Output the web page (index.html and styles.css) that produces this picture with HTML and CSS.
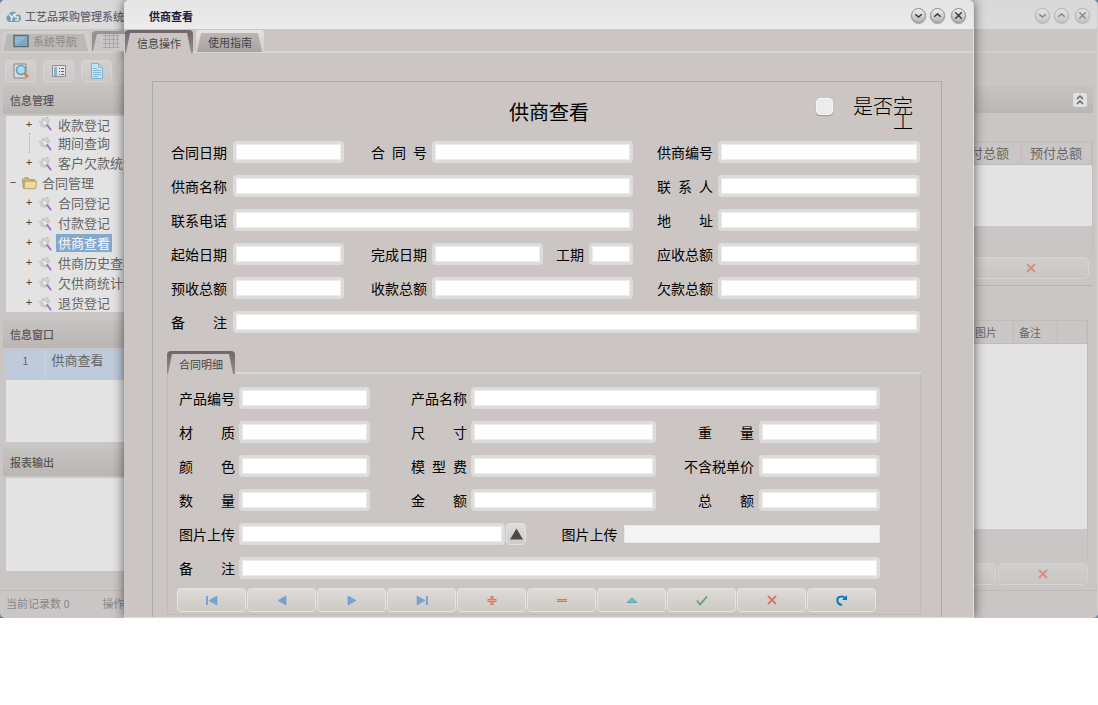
FILE: index.html
```
<!DOCTYPE html>
<html lang="zh-CN">

<head>
    <meta charset="UTF-8">
    <meta name="viewport" content="width=device-width, initial-scale=1.0">
    <title>工艺品采购管理系统</title>
    <link rel="stylesheet" href="styles.css">
</head>

<body>
    <!-- shared icons -->
    <svg class="sprite" aria-hidden="true">
        <symbol id="i-down" viewBox="0 0 16 16"><path d="M4 6.5L8 10l4-3.500" fill="none" stroke="#333" stroke-width="1.7"/></symbol>
        <symbol id="i-up" viewBox="0 0 16 16"><path d="M4 9.500L8 6l4 3.500" fill="none" stroke="#333" stroke-width="1.7"/></symbol>
        <symbol id="i-close" viewBox="0 0 16 16"><path d="M4 4l8 8M12 4l-8 8" fill="none" stroke="#333" stroke-width="1.6"/></symbol>
        <symbol id="i-wand" viewBox="0 0 16 16">
            <path d="M5 2l2 1 3-2 1 3 2 1-2 2 0 3-2 0-1 3-3-2-2 0 0-3-2-2 3-1z" fill="#cfcfcf" stroke="#b4b4b4" stroke-dasharray="1 1"/>
            <path d="M9 9l5 6" stroke="#a66fd0" stroke-width="2"/>
            <path d="M6 6l3 3" stroke="#f4f4f4" stroke-width="2"/>
        </symbol>
        <symbol id="i-cross" viewBox="0 0 12 12"><path d="M2 2l8 8M10 2l-8 8" fill="none" stroke="#d8756b" stroke-width="1.8"/></symbol>
    </svg>

    <div class="desktop">
        <div class="app">
            <header class="titlebar">
                <svg class="logo" viewBox="0 0 16 14"><path d="M4 13a4 4 0 0 1-1-7 5 5 0 0 1 9-1 4 4 0 0 1 0 8z" fill="#6f9fb8"/><path d="M4 5l3 4 2-4M7 9l-1 3M13 5h-3v3h3v3h-3" fill="none" stroke="#e4e8ea" stroke-width="1.5"/></svg>
                <h1>工艺品采购管理系统</h1>
                <div class="win-buttons">
                    <button type="button" aria-label="最小化"><svg><use href="#i-down"/></svg></button>
                    <button type="button" aria-label="最大化"><svg><use href="#i-up"/></svg></button>
                    <button type="button" aria-label="关闭"><svg><use href="#i-close"/></svg></button>
                </div>
            </header>
            <nav class="tabs">
                <button type="button" class="tab">
                    <svg class="tab-icon" viewBox="0 0 16 13"><path d="M1 1h14v11H1z" fill="#8dbad2" stroke="#656b70" stroke-width="1.5"/><path d="M2 11L14 2v9z" fill="#79a8c4"/></svg>
                    <span>系统导航</span>
                </button>
                <button type="button" class="tab active" aria-label="工作表">
                    <svg class="tab-icon" viewBox="0 0 16 14"><path d="M2.500 0v14M6.500 0v14M10.500 0v14M14.500 0v14M0 1.500h16M0 5.500h16M0 9.500h16M0 13.500h16" stroke="#aaa7a6" fill="none"/></svg>
                </button>
            </nav>

            <div class="app-body">
                <aside class="sidebar">
                    <div class="toolbar">
                        <button type="button" aria-label="查找"><svg viewBox="0 0 16 16"><path d="M1 1h12v14H1z" fill="#dcdcdc" stroke="#858585"/><circle cx="8" cy="7" r="4.500" fill="#a9dcef" stroke="#5f9dbd" stroke-width="1.500"/><path d="M11 10l4 4" stroke="#d08560" stroke-width="3"/></svg></button>
                        <button type="button" aria-label="列表"><svg viewBox="0 0 16 16"><path d="M1.500 2.500h13v11h-13z" fill="#e2e2e2" stroke="#8f8f8f"/><path d="M3 4h3v9H3z" fill="#86b5cc"/><path d="M8 5.500h1m1 0h3M8 8.500h1m1 0h3M8 11.500h1m1 0h3" stroke="#666"/></svg></button>
                        <button type="button" aria-label="文档"><svg viewBox="0 0 16 16"><path d="M2.500.5h7l4 4v11h-11z" fill="#c4e3f5" stroke="#7fb0cf"/><path d="M9.500.5v4h4M4 5.500h4M4 7.500h8M4 9.500h8M4 11.500h8M4 13.500h5" fill="none" stroke="#86b9d6"/></svg></button>
                        <button type="button" aria-label="更多"></button>
                    </div>
                    <h2 class="pane-title">信息管理</h2>
                    <ul class="tree">
                        <li><i>+</i><svg><use href="#i-wand"/></svg><span>收款登记</span></li>
                        <li><i class="leaf"></i><svg><use href="#i-wand"/></svg><span>期间查询</span></li>
                        <li><i>+</i><svg><use href="#i-wand"/></svg><span>客户欠款统计</span></li>
                        <li class="folder"><i>−</i><svg viewBox="0 0 17 16"><path d="M1 4l2-2h4l2 2h5v9H2z" fill="#cbb97d" stroke="#a39461"/><path d="M3 5.500h13l-1 8H3z" fill="#ecdc9c" stroke="#b3a26a"/></svg><span>合同管理</span></li>
                        <li><i>+</i><svg><use href="#i-wand"/></svg><span>合同登记</span></li>
                        <li><i>+</i><svg><use href="#i-wand"/></svg><span>付款登记</span></li>
                        <li class="selected"><i>+</i><svg><use href="#i-wand"/></svg><span>供商查看</span></li>
                        <li><i>+</i><svg><use href="#i-wand"/></svg><span>供商历史查看</span></li>
                        <li><i>+</i><svg><use href="#i-wand"/></svg><span>欠供商统计表</span></li>
                        <li><i>+</i><svg><use href="#i-wand"/></svg><span>退货登记</span></li>
                    </ul>
                    <h2 class="pane-title">信息窗口</h2>
                    <div class="pane windows">
                        <table>
                            <tr><td class="num">1</td><td>供商查看</td></tr>
                        </table>
                    </div>
                    <h2 class="pane-title">报表输出</h2>
                    <div class="pane reports"></div>
                </aside>

                <main class="work">
                    <div class="band">
                        <button type="button" aria-label="收起"><svg viewBox="0 0 14 14"><path d="M4 6l3-3 3 3M4 11l3-3 3 3" fill="none" stroke="#666" stroke-width="1.5"/></svg></button>
                    </div>
                    <div class="grid-box totals">
                        <table>
                            <tr><th></th><th class="w-total">应付总额</th><th class="w-prepaid">预付总额</th></tr>
                            <tr class="blank"><td></td><td></td><td></td></tr>
                        </table>
                    </div>
                    <div class="row-buttons wide">
                        <button type="button" aria-label="取消"><svg><use href="#i-cross"/></svg></button>
                    </div>
                    <div class="grid-box details">
                        <table>
                            <tr><th></th><th class="w-pic">图片</th><th class="w-note">备注</th><th class="w-end"></th></tr>
                            <tr class="blank"><td colspan="4"></td></tr>
                        </table>
                    </div>
                    <div class="row-buttons">
                        <button type="button" class="fill" aria-label="确认"></button>
                        <button type="button" aria-label="取消"><svg><use href="#i-cross"/></svg></button>
                    </div>
                </main>
            </div>
            <footer class="status"><span>当前记录数 0</span><span>操作</span></footer>
        </div>

        <section class="dialog" role="dialog" aria-labelledby="dialog-title">
            <header class="titlebar">
                <h1 id="dialog-title">供商查看</h1>
                <div class="win-buttons">
                    <button type="button" aria-label="最小化"><svg><use href="#i-down"/></svg></button>
                    <button type="button" aria-label="最大化"><svg><use href="#i-up"/></svg></button>
                    <button type="button" aria-label="关闭"><svg><use href="#i-close"/></svg></button>
                </div>
            </header>
            <nav class="tabs">
                <button type="button" class="tab active"><span>信息操作</span></button>
                <button type="button" class="tab"><span>使用指南</span></button>
            </nav>

            <form class="sheet">
                <div class="sheet-head">
                    <h2>供商查看</h2>
                    <input type="checkbox" id="done">
                    <label for="done">是否完工</label>
                </div>

                <div class="fields contract">
                    <label for="sign-date">合同日期</label><input id="sign-date">
                    <label for="contract-no" class="c2">合同号</label><input id="contract-no" class="mid">
                    <label for="vendor-no" class="c3">供商编号</label><input id="vendor-no">

                    <label for="vendor">供商名称</label><input id="vendor" class="long">
                    <label for="contact" class="c3">联系人</label><input id="contact">

                    <label for="phone">联系电话</label><input id="phone" class="long">
                    <label for="address" class="c3">地址</label><input id="address">

                    <label for="start">起始日期</label><input id="start">
                    <label for="finish" class="c2">完成日期</label><input id="finish">
                    <label for="period" class="c-period">工期</label><input id="period">
                    <label for="receivable" class="c3">应收总额</label><input id="receivable">

                    <label for="prepaid">预收总额</label><input id="prepaid">
                    <label for="received" class="c2">收款总额</label><input id="received" class="mid">
                    <label for="owed" class="c3">欠款总额</label><input id="owed">

                    <label for="note">备注</label><input id="note" class="full">
                </div>

                <div class="detail">
                    <nav class="tabs">
                        <button type="button" class="tab active"><span>合同明细</span></button>
                    </nav>
                    <div class="detail-body">
                        <div class="fields product">
                            <label for="p-no">产品编号</label><input id="p-no">
                            <label for="p-name" class="c2">产品名称</label><input id="p-name" class="full">

                            <label for="material">材质</label><input id="material">
                            <label for="size" class="c2">尺寸</label><input id="size">
                            <label for="weight" class="c3">重量</label><input id="weight">

                            <label for="color">颜色</label><input id="color">
                            <label for="mold" class="c2">模型费</label><input id="mold">
                            <label for="price" class="c3 five">不含税单价</label><input id="price">

                            <label for="qty">数量</label><input id="qty">
                            <label for="amount" class="c2">金额</label><input id="amount">
                            <label for="total" class="c3">总额</label><input id="total">

                            <label for="upload">图片上传</label>
                            <div class="upload">
                                <input id="upload">
                                <button type="button" class="pick" aria-label="选择图片"><svg viewBox="0 0 14 12"><path d="M7 0l7 12H0z" fill="#4a4a4a"/></svg></button>
                                <label for="picture">图片上传</label>
                                <input id="picture" class="flat" readonly>
                            </div>

                            <label for="p-note">备注</label><input id="p-note" class="full">
                        </div>
                        <div class="navigator">
                            <button type="button" aria-label="首条"><svg viewBox="0 0 12 12"><path d="M1 2v9" stroke="#5e94cb" stroke-width="1.500"/><path d="M11 2v9L3 6.500z" fill="#71a5da" stroke="#6590bb" stroke-width=".5"/></svg></button>
                            <button type="button" aria-label="上一条"><svg viewBox="0 0 12 12"><path d="M10 2v9L2 6.500z" fill="#71a5da" stroke="#6590bb" stroke-width=".5"/></svg></button>
                            <button type="button" aria-label="下一条"><svg viewBox="0 0 12 12"><path d="M2 2v9l8-4.500z" fill="#71a5da" stroke="#6590bb" stroke-width=".5"/></svg></button>
                            <button type="button" aria-label="末条"><svg viewBox="0 0 12 12"><path d="M11 2v9" stroke="#5e94cb" stroke-width="1.500"/><path d="M1 2v9l8-4.500z" fill="#71a5da" stroke="#6590bb" stroke-width=".5"/></svg></button>
                            <button type="button" aria-label="新增"><svg viewBox="0 0 12 12"><path d="M6 2v9M1.500 6.500h9" stroke="#d4775c" stroke-width="3"/><path d="M6 3v7M2 6.500h8" stroke="#eda287"/></svg></button>
                            <button type="button" aria-label="删除"><svg viewBox="0 0 12 12"><path d="M1 6.500h10" stroke="#d4775c" stroke-width="3"/><path d="M1 6.500h10" stroke="#eda287"/></svg></button>
                            <button type="button" aria-label="编辑"><svg viewBox="0 0 12 12"><path d="M6 4l5 4.500H1z" fill="#6cc0cb" stroke="#58a5b3"/></svg></button>
                            <button type="button" aria-label="保存"><svg viewBox="0 0 12 12"><path d="M1 6.500l3 4 7-8" fill="none" stroke="#66a077" stroke-width="1.800"/></svg></button>
                            <button type="button" aria-label="取消"><svg><use href="#i-cross"/></svg></button>
                            <button type="button" aria-label="刷新"><svg viewBox="0 0 12 12"><path d="M6 11C0 10 0 3 5 2.500c2-.5 3 .5 4 1.500" fill="none" stroke="#0b76c4" stroke-width="2"/><path d="M11 1v5H6z" fill="#0b76c4"/></svg></button>
                        </div>
                    </div>
                </div>
            </form>
        </section>
    </div>
</body>

</html>
```

FILE: styles.css
```
* {
    box-sizing: border-box;
}

body {
    margin: 0;
    background: #fff;
    color: #000;
    font: 14px/20px "Noto Sans CJK SC", sans-serif;
}

h1,
h2 {
    margin: 0;
}

button {
    padding: 0;
    border: 0;
    font: inherit;
    color: inherit;
}

svg {
    display: block;
    flex: none;
}

.sprite {
    display: none;
}

/* both windows share one cell, the dialog lies on top */
.desktop {
    display: grid;
    overflow: hidden;
    background: #5b81a3;
}

.app,
.dialog {
    grid-area: 1 / 1;
    display: flex;
    flex-direction: column;
    min-width: 0;
}

.app {
    background: #cac6c5;
    border-right: 1px solid #d3d1d0;
    border-radius: 5px;
    color: #666;
    overflow: hidden;
}

.dialog {
    margin: 0 124px;
    background: #cbc6c3;
    border-right: 1px solid #e2dfdd;
    border-bottom: 1px solid #dedad8;
    border-radius: 5px 5px 0 0;
    box-shadow: 0 0 12px rgba(0, 0, 0, .6);
    overflow: hidden;
}

/* title bars */
.titlebar {
    display: flex;
    align-items: center;
    height: 29px;
    padding: 2px 7px 0 5px;
    background: linear-gradient(#d8d8d8, #dcdcdc);
}

.titlebar h1 {
    flex: 1;
    font-size: 11px;
    font-weight: 500;
    color: #666272;
}

.logo {
    width: 16px;
    height: 14px;
    margin-right: 4px;
}

.dialog .titlebar {
    padding-left: 25px;
    background: linear-gradient(#e4e4e4, #ececec);
}

.dialog .titlebar h1 {
    font-weight: 700;
    color: #1c1a3c;
}

.win-buttons {
    display: flex;
    gap: 4px;
}

.win-buttons button {
    width: 15px;
    height: 15px;
    border: 1px solid #8f8d8b;
    border-radius: 50%;
    background: linear-gradient(#eee, #b9b7b5);
    box-shadow: 0 1px 1px rgba(0, 0, 0, .3);
}

.win-buttons button:last-child {
    margin-left: 2px;
}

.win-buttons svg {
    width: 13px;
    height: 13px;
}

.app .win-buttons {
    opacity: .5;
}

/* tabs */
.tabs {
    display: flex;
    gap: 3px;
    height: 24px;
    padding: 1px 1px 0;
    border-bottom: 2px solid #dad6d4;
}

.tab {
    position: relative;
    width: 68px;
    height: 22px;
    padding-top: 2px;
    border-radius: 4px 4px 0 0;
    background: linear-gradient(#e6e3e1, #d0ccca);
    font-size: 11px;
    color: #444;
}

.tab::before {
    content: "";
    position: absolute;
    inset: 3px 2px 0 1px;
    background: linear-gradient(#bcb7b4, #a9a4a1);
    clip-path: polygon(4px 0, calc(100% - 4px) 0, 100% 100%, 0 100%);
}

.tab.active {
    height: 23px;
    background: linear-gradient(#716469, #978d90);
}

.tab.active::before {
    background: #cbc6c3;
}

.tab span,
.tab svg {
    position: relative;
}

.app .tabs {
    gap: 2px;
    padding: 2px 2px 0;
    border-color: #d1cfcd;
}

.app .tab {
    display: flex;
    align-items: center;
    gap: 4px;
    width: 88px;
    height: 20px;
    padding: 0 0 0 11px;
    color: #8d8b8a;
    background: #d0cecc;
}

.app .tab::before {
    background: #bbb8b6;
}

.app .tab.active {
    background: #989092;
}

.app .tab.active::before {
    background: #cac6c5;
}

.tab-icon {
    width: 16px;
    height: 14px;
}

/* application window behind the dialog */
.app-body {
    flex: 1;
    display: grid;
    grid-template-columns: 160px 1fr;
    border-bottom: 1px solid #bcb9b7;
}

.sidebar {
    display: flex;
    flex-direction: column;
    min-width: 0;
    padding-left: 3px;
}

.toolbar {
    display: flex;
    gap: 7px;
    padding: 7px 0 4px 2px;
}

.toolbar button {
    display: flex;
    align-items: center;
    justify-content: center;
    width: 31px;
    height: 22px;
    border: 1px solid #d6d4d2;
    border-radius: 4px;
    background: linear-gradient(#d3d1cf, #cbc9c7);
}

.toolbar svg {
    width: 16px;
    height: 16px;
}

.pane-title {
    height: 28px;
    padding-left: 7px;
    background: linear-gradient(#c6c4c2, #b9b6b4);
    font-size: 11px;
    line-height: 28px;
    font-weight: 500;
    color: #555;
}

.tree {
    margin: 2px 0 8px 3px;
    padding: 0;
    height: 196px;
    overflow: hidden;
    background: #e3e3e3;
    list-style: none;
    font-size: 13px;
}

.tree li {
    display: flex;
    align-items: center;
    height: 20px;
    padding-left: 18px;
    white-space: nowrap;
    color: #666;
}

.tree li:first-child {
    height: 17px;
}

.tree li:first-child span {
    line-height: 16px;
}

.tree li:first-child svg {
    margin-top: -2px;
}

.tree i {
    width: 10px;
    font: 11px/20px "Liberation Mono", monospace;
    text-align: center;
    color: #444;
}

.tree .leaf {
    align-self: stretch;
    width: 5px;
    margin-left: 5px;
    border-left: 1px dotted #aaa;
}

.tree svg {
    width: 15px;
    height: 15px;
    margin: 0 3px 0 4px;
}

.tree span {
    padding: 0 2px;
    line-height: 18px;
}

.tree .folder {
    padding-left: 2px;
}

.tree .folder svg {
    width: 17px;
    margin: 0 2px 0 3px;
}

.tree .selected span {
    background: #82a8cf;
    color: #eee;
    font-weight: 500;
}

.pane {
    margin: 2px 0 6px 3px;
    background: #e3e3e3;
}

.windows {
    height: 92px;
    font-size: 13px;
}

.windows table {
    width: 100%;
    border-collapse: collapse;
    background: #bfcadb;
}

.windows td {
    height: 30px;
    padding: 0 6px 10px;
}

.windows .num {
    width: 39px;
    font-size: 11px;
    text-align: center;
    border-right: 1px solid #ccd3de;
}

.reports {
    height: 93px;
    margin-bottom: 18px;
}

.work {
    display: flex;
    flex-direction: column;
    min-width: 0;
    padding-top: 33px;
}

.band {
    display: flex;
    align-items: center;
    justify-content: flex-end;
    height: 27px;
    margin-right: 4px;
    padding-right: 6px;
    background: linear-gradient(#c6c4c2, #b9b6b4);
}

.band button {
    width: 14px;
    height: 14px;
    border-radius: 2px;
    background: #e0e0e0;
}

.grid-box {
    border-right: 1px solid #bfbcba;
}

.grid-box table {
    width: 100%;
    table-layout: fixed;
    border-collapse: collapse;
}

.grid-box th {
    height: 23px;
    padding: 0 0 0 8px;
    border: 1px solid #bfbcba;
    font-weight: 400;
    line-height: 18px;
    text-align: left;
    white-space: nowrap;
}

.blank {
    background: #e3e3e3;
}

.totals {
    height: 113px;
    margin: 28px 4px 3px 0;
    font-size: 13px;
}

.totals .blank td {
    height: 61px;
}

.w-total {
    width: 73px;
}

.w-prepaid {
    width: 70px;
}

.details {
    height: 238px;
    margin: 7px 9px 5px 0;
    font-size: 11px;
}

.details th {
    padding-left: 5px;
}

.details .blank td {
    height: 185px;
}

.w-pic,
.w-note {
    width: 44px;
}

.w-end {
    width: 29px;
}

.row-buttons {
    display: flex;
    gap: 2px;
    padding-right: 9px;
}

.row-buttons button {
    display: flex;
    align-items: center;
    justify-content: center;
    width: 90px;
    height: 22px;
    border: 1px solid #d6d4d2;
    border-radius: 5px;
    background: linear-gradient(#d1cfcd, #c9c7c4);
}

.row-buttons .fill {
    flex: 1;
}

.row-buttons svg {
    width: 12px;
    height: 12px;
    opacity: .7;
}

.row-buttons.wide {
    justify-content: flex-end;
    margin-right: 4px;
    padding: 0 4px 6px 0;
    border-bottom: 1px solid #b5b2b0;
}

.row-buttons.wide button {
    width: 117px;
}

.row-buttons.wide + .details {
    margin-top: 34px;
}

.status {
    display: flex;
    gap: 33px;
    padding: 2px 6px 5px;
    font-size: 11px;
    color: #888;
}

/* dialog form */
.sheet {
    flex: 1;
    margin: 28px 31px 0 28px;
    padding: 0 20px 2px 14px;
    border: 1px solid #aeaaa8;
    border-bottom: 0;
}

.sheet-head {
    display: grid;
    grid-template-columns: 1fr 17px 80px;
    height: 59px;
    padding: 16px 8px 0 5px;
}

.sheet-head h2 {
    padding: 4px 0 0 110px;
    font-size: 20px;
    font-weight: 400;
    text-align: center;
}

.sheet-head input {
    appearance: none;
    width: 17px;
    height: 17px;
    margin: 0;
    border: 1px solid #f6f6f6;
    border-radius: 4px;
    background: #ececeb;
    box-shadow: 0 1px 1px #999;
}

.sheet-head label {
    padding-left: 20px;
    font-size: 20px;
    font-weight: 300;
    line-height: 15px;
    text-align: right;
}

.fields {
    display: grid;
    grid-auto-rows: 22px;
    gap: 12px 0;
    align-items: center;
}

.fields label {
    grid-column-start: 1;
    width: 56px;
    white-space: nowrap;
    text-align-last: justify;
}

.fields input {
    width: 100%;
    min-width: 0;
    height: 22px;
    padding: 0 2px;
    border: 3px solid #dcdcdc;
    border-radius: 4px;
    background: #fff;
    box-shadow: inset 0 0 0 1px #ececec;
    font: inherit;
    font-size: 13px;
}

.contract {
    grid-template-columns: 62px 111fr 27px 61px 111fr 13px 33px 44fr 24px 61px 202fr;
    margin: 0 1px 0 4px;
}

.contract .c2 {
    grid-column-start: 4;
}

.contract .c-period {
    grid-column-start: 7;
    width: 28px;
}

.contract .c3 {
    grid-column-start: 10;
}

.contract .mid {
    grid-column: 5 / 9;
}

.contract .long {
    grid-column: 2 / 9;
}

.fields .full {
    grid-column-end: -1;
}

.contract .full {
    grid-column-start: 2;
}

.detail {
    margin-top: 17px;
}

.detail .tabs {
    padding: 1px 0 0;
}

.detail-body {
    padding: 13px 40px 2px 11px;
    border: 1px solid #c0bbb8;
    border-top: 0;
}

.product {
    grid-template-columns: 60px 131fr 41px 60px 185fr 28px 75px 121fr;
}

.product .c2 {
    grid-column-start: 4;
}

.product .c3 {
    grid-column-start: 7;
    margin-left: 14px;
}

.product .five {
    width: 70px;
    margin-left: 0;
}

#p-name {
    grid-column-start: 5;
}

#p-note,
.upload {
    grid-column: 2 / -1;
}

.upload {
    display: grid;
    grid-template-columns: 267fr 21px 35px 63px 256fr;
    align-items: center;
}

.upload label {
    grid-column-start: 4;
}

.upload .pick {
    display: flex;
    align-items: center;
    justify-content: center;
    height: 22px;
    margin-left: 1px;
    border: 1px solid #e4e1de;
    border-radius: 4px;
    background: linear-gradient(#e0ddda, #cfcbc7);
}

.pick svg {
    width: 13px;
    height: 12px;
}

.upload .flat {
    height: 18px;
    border: 1px solid #eae8e7;
    border-radius: 0;
    background: #f4f4f4;
    box-shadow: none;
}

.navigator {
    display: flex;
    gap: 1px;
    margin: 9px 4px 0 -2px;
}

.navigator button {
    flex: 1;
    display: flex;
    align-items: center;
    justify-content: center;
    height: 24px;
    border: 1px solid #e6e3e1;
    border-radius: 4px;
    background: linear-gradient(#dedbd8, #cdc9c4);
}

.navigator svg {
    width: 12px;
    height: 12px;
}
```
